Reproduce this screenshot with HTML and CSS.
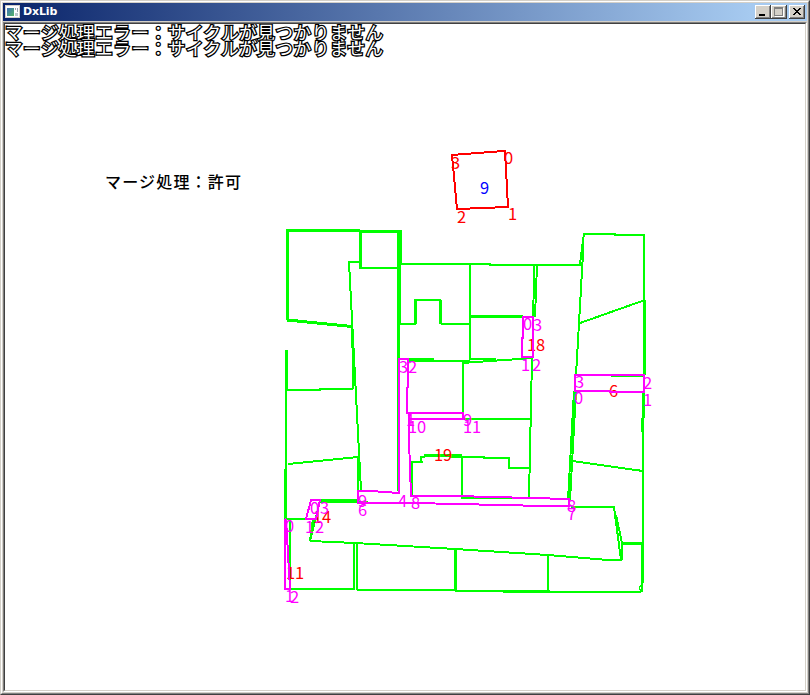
FILE: index.html
```
<!DOCTYPE html>
<html lang="ja">
<head>
<meta charset="utf-8">
<title>DxLib</title>
<link rel="stylesheet" href="styles.css">
</head>
<body>
<div class="window">
  <div class="frame">
    <header class="titlebar">
      <svg class="app-icon" width="16" height="14" viewBox="0 0 16 14" shape-rendering="crispEdges">
        <defs><linearGradient id="pane" x2="1" y2="1"><stop stop-color="#3f70b8"/><stop offset="1" stop-color="#55b565"/></linearGradient></defs>
        <path fill="#d4d0c8" d="M0 0h15v13H0z"/><path fill="#fff" d="M1 1h13v11H1z"/>
        <path fill="url(#pane)" d="M2 3h7v8H2z"/><path fill="#9aa5ad" d="M10 3h1v2h-1zM12 3h1v4h-1z"/><path fill="#bcc7cc" d="M10 8h3v3h-3z"/>
      </svg>
      <span class="title">DxLib</span>
      <div class="buttons">
        <span class="button"><svg width="16" height="14" shape-rendering="crispEdges"><path d="M4 9h6v2H4z"/></svg></span>
        <span class="button"><svg width="16" height="14" shape-rendering="crispEdges"><path fill="#fff" d="M4 3h9v9H4z"/><path fill="#808080" d="M3 2h9v9H3z"/><path fill="#d4d0c8" d="M4 4h7v6H4z"/></svg></span>
        <span class="button close"><svg width="16" height="14" shape-rendering="crispEdges"><path d="M4 3h2v1h1v1h2V4h1V3h2v1h-1v1h-1v1H9v1h1v1h1v1h1v1h-2V9H9V8H7v1H6v1H4V9h1V8h1V7h1V6H6V5H5V4H4z"/></svg></span>
      </div>
    </header>
    <main class="client">
      <svg class="canvas" width="800" height="666" viewBox="5 24 800 666">
        <g class="log">
          <text x="5" y="39" textLength="378">マージ処理エラー：サイクルが見つかりません</text>
          <text x="5" y="55" textLength="378">マージ処理エラー：サイクルが見つかりません</text>
        </g>
        <text class="status" x="105" y="188" textLength="136">マージ処理：許可</text>

        <g class="green">
          <path d="M287 390V350M286 350V470M287 390H320V389H353M288 464L358 457M349 262L361 490M352 327L353.5 389M348 262H360M359 268H399M401 231V264M400 264H490V265H583"/>
          <path d="M399 324H416M414 300H441M441 324H470M470 265V360M408 359H434M408 361H470M470 359H496M462 363L533 358M463 362V413M408 419H531"/>
          <path d="M534.5 265L533 317M537 265L535 317M532 358L529 497M584 234H615V235H645M644 234V300M584 233L580 264M583.5 245L576 375M580 323L645 300M611 376H643"/>
          <path d="M574 391L568 500M576 391L570 500M572 461L643 471M643 391V583M642 583V592M571 507H614L621 560H608L548 555L455 549L355 543L310 541M616 515L622 543V560"/>
          <path d="M548 555V591M354 543V589M357 543V590M290 519V589M286 519H318M285 589H355M357 590H455M455 591H550M503 592H641M358 457V490"/>
          <path d="M310 541L313 519M310 541L320 501M412 462V496M411 462H423M421 462V457H425M450 457H484V458H509V468H530M462 457V497M461 498H530M358 502H368"/>
          <g class="wide">
            <path d="M287.5 232V320M286 230.5H360M360 231.5H402M287.5 320L352 326.5M360.5 232V268M398.5 232V491M399.5 264V324M415.5 300V324M440.5 300V324M469 316.5H523M644.5 300V375M644 391L642.5 432M642.5 543V583M622 543.5H642M455.5 549V591M285.5 469V519M424 455.5H462M320 501H358M320 500H358"/>
          </g>
          <path class="thin" d="M642 585h-2v1h-1v3h1v2h2"/>
        </g>

        <g class="index red">
          <text x="527" y="351" textLength="7">1</text><text x="536" y="351" textLength="7">8</text>
          <text x="609" y="397" textLength="7">6</text>
          <text x="434" y="461" textLength="7">1</text><text x="443" y="461" textLength="7">9</text>
          <text x="313" y="523" textLength="7">1</text><text x="322" y="523" textLength="7">4</text>
          <text x="286" y="579" textLength="7">1</text><text x="295" y="579" textLength="7">1</text>
        </g>

        <g class="magenta">
          <path d="M399 359H408V387L407 388V413H463V419H409V440L411 496H455L569 499V506H545L413 503H358V491H371L399 493ZM409 412V419"/>
          <path d="M523 317H533V357H522V338H523ZM575 375H644V392H610V391H575ZM311 500H320L316 519H306ZM286 519L285 520V589H290L286 519"/>
        </g>
        <g class="index pink">
          <text x="399" y="373" textLength="7">3</text><text x="408" y="373" textLength="7">2</text>
          <text x="523" y="330" textLength="7">0</text><text x="533" y="331" textLength="7">3</text>
          <text x="521" y="371" textLength="7">1</text><text x="532" y="371" textLength="7">2</text>
          <text x="575" y="388" textLength="7">3</text><text x="643" y="389" textLength="7">2</text>
          <text x="574" y="404" textLength="7">0</text><text x="643" y="406" textLength="7">1</text>
          <text x="406" y="426" textLength="7">1</text><text x="408" y="433" textLength="7">1</text><text x="417" y="433" textLength="7">0</text>
          <text x="463" y="426" textLength="7">9</text><text x="463" y="433" textLength="7">1</text><text x="472" y="433" textLength="7">1</text>
          <text x="358" y="507" textLength="7">9</text><text x="358" y="516" textLength="7">6</text>
          <text x="398" y="507" textLength="7">4</text><text x="411" y="509" textLength="7">8</text>
          <text x="310" y="514" textLength="7">0</text><text x="320" y="514" textLength="7">3</text>
          <text x="305" y="533" textLength="7">1</text><text x="315" y="533" textLength="7">2</text>
          <text x="285" y="532" textLength="7">0</text><text x="285" y="602" textLength="7">1</text><text x="290" y="603" textLength="7">2</text>
          <text x="567" y="512" textLength="7">8</text><text x="567" y="520" textLength="7">7</text>
        </g>

        <path class="red-box" d="M452 155L504 151H505L508 207L457 209Z"/>
        <g class="index red">
          <text x="451" y="169" textLength="7">3</text><text x="504" y="164" textLength="7">0</text>
          <text x="508" y="220" textLength="7">1</text><text x="457" y="223" textLength="7">2</text>
        </g>
        <g class="index blue"><text x="480" y="194" textLength="7">9</text></g>
      </svg>
    </main>
  </div>
</div>
</body>
</html>
```
FILE: styles.css
```
* { box-sizing: border-box; }
body { margin: 0; overflow: hidden; }
.window {
  width: 810px; height: 695px; background: #d4d0c8;
  border: 1px solid; border-color: #d4d0c8 #404040 #404040 #d4d0c8;
}
.frame {
  height: 693px; display: flex; flex-direction: column;
  border: 1px solid; border-color: #fff #808080 #808080 #fff;
  padding-top: 1px;
}
.titlebar {
  height: 18px; margin: 0 0 1px 1px; padding: 0 2px; margin-right: 1px;
  display: flex; align-items: center;
  background: linear-gradient(90deg, #0a246a, #a6caf0 93%);
}
.app-icon { margin-top: -1px; }
.title { margin-left: 2px; color: #fff; font: bold 11px/18px "DejaVu Sans", sans-serif; letter-spacing: -.15px; }
.buttons { margin-left: auto; display: flex; position: relative; top: 0; }
.button {
  width: 16px; height: 14px; display: block; background: #d4d0c8;
  box-shadow: inset -1px -1px #404040, inset 1px 1px #fff, inset -2px -2px #808080;
}
.button svg { display: block; }
.close { margin-left: 2px; }
.client {
  width: 804px; height: 670px; margin-left: 1px; background: #fff;
  border: 1px solid; border-color: #808080 #fff #fff #808080;
}
.canvas {
  display: block; box-sizing: content-box;
  border: 1px solid; border-color: #404040 #d4d0c8 #d4d0c8 #404040;
}
.canvas text { font-family: "Noto Sans CJK JP", sans-serif; }
.log text {
  font-size: 17.5px; fill: #fff; stroke: #000; stroke-width: 2.6px;
  paint-order: stroke; stroke-linejoin: miter;
}
.status { font-size: 16px; font-weight: 500; }
.canvas path { fill: none; stroke-width: 2px; shape-rendering: crispEdges; }
.green path { stroke: #0f0; }
.green .wide path { stroke-width: 3px; }
.green .thin { stroke-width: 1px; }
.magenta path { stroke: #f0f; }
.canvas .red-box { stroke: #f00; }
.index text { font-size: 16.5px; font-weight: 400; lengthAdjust: spacingAndGlyphs; }
.red { fill: #f00; }
.pink { fill: #f0f; }
.blue { fill: #00f; }
```
